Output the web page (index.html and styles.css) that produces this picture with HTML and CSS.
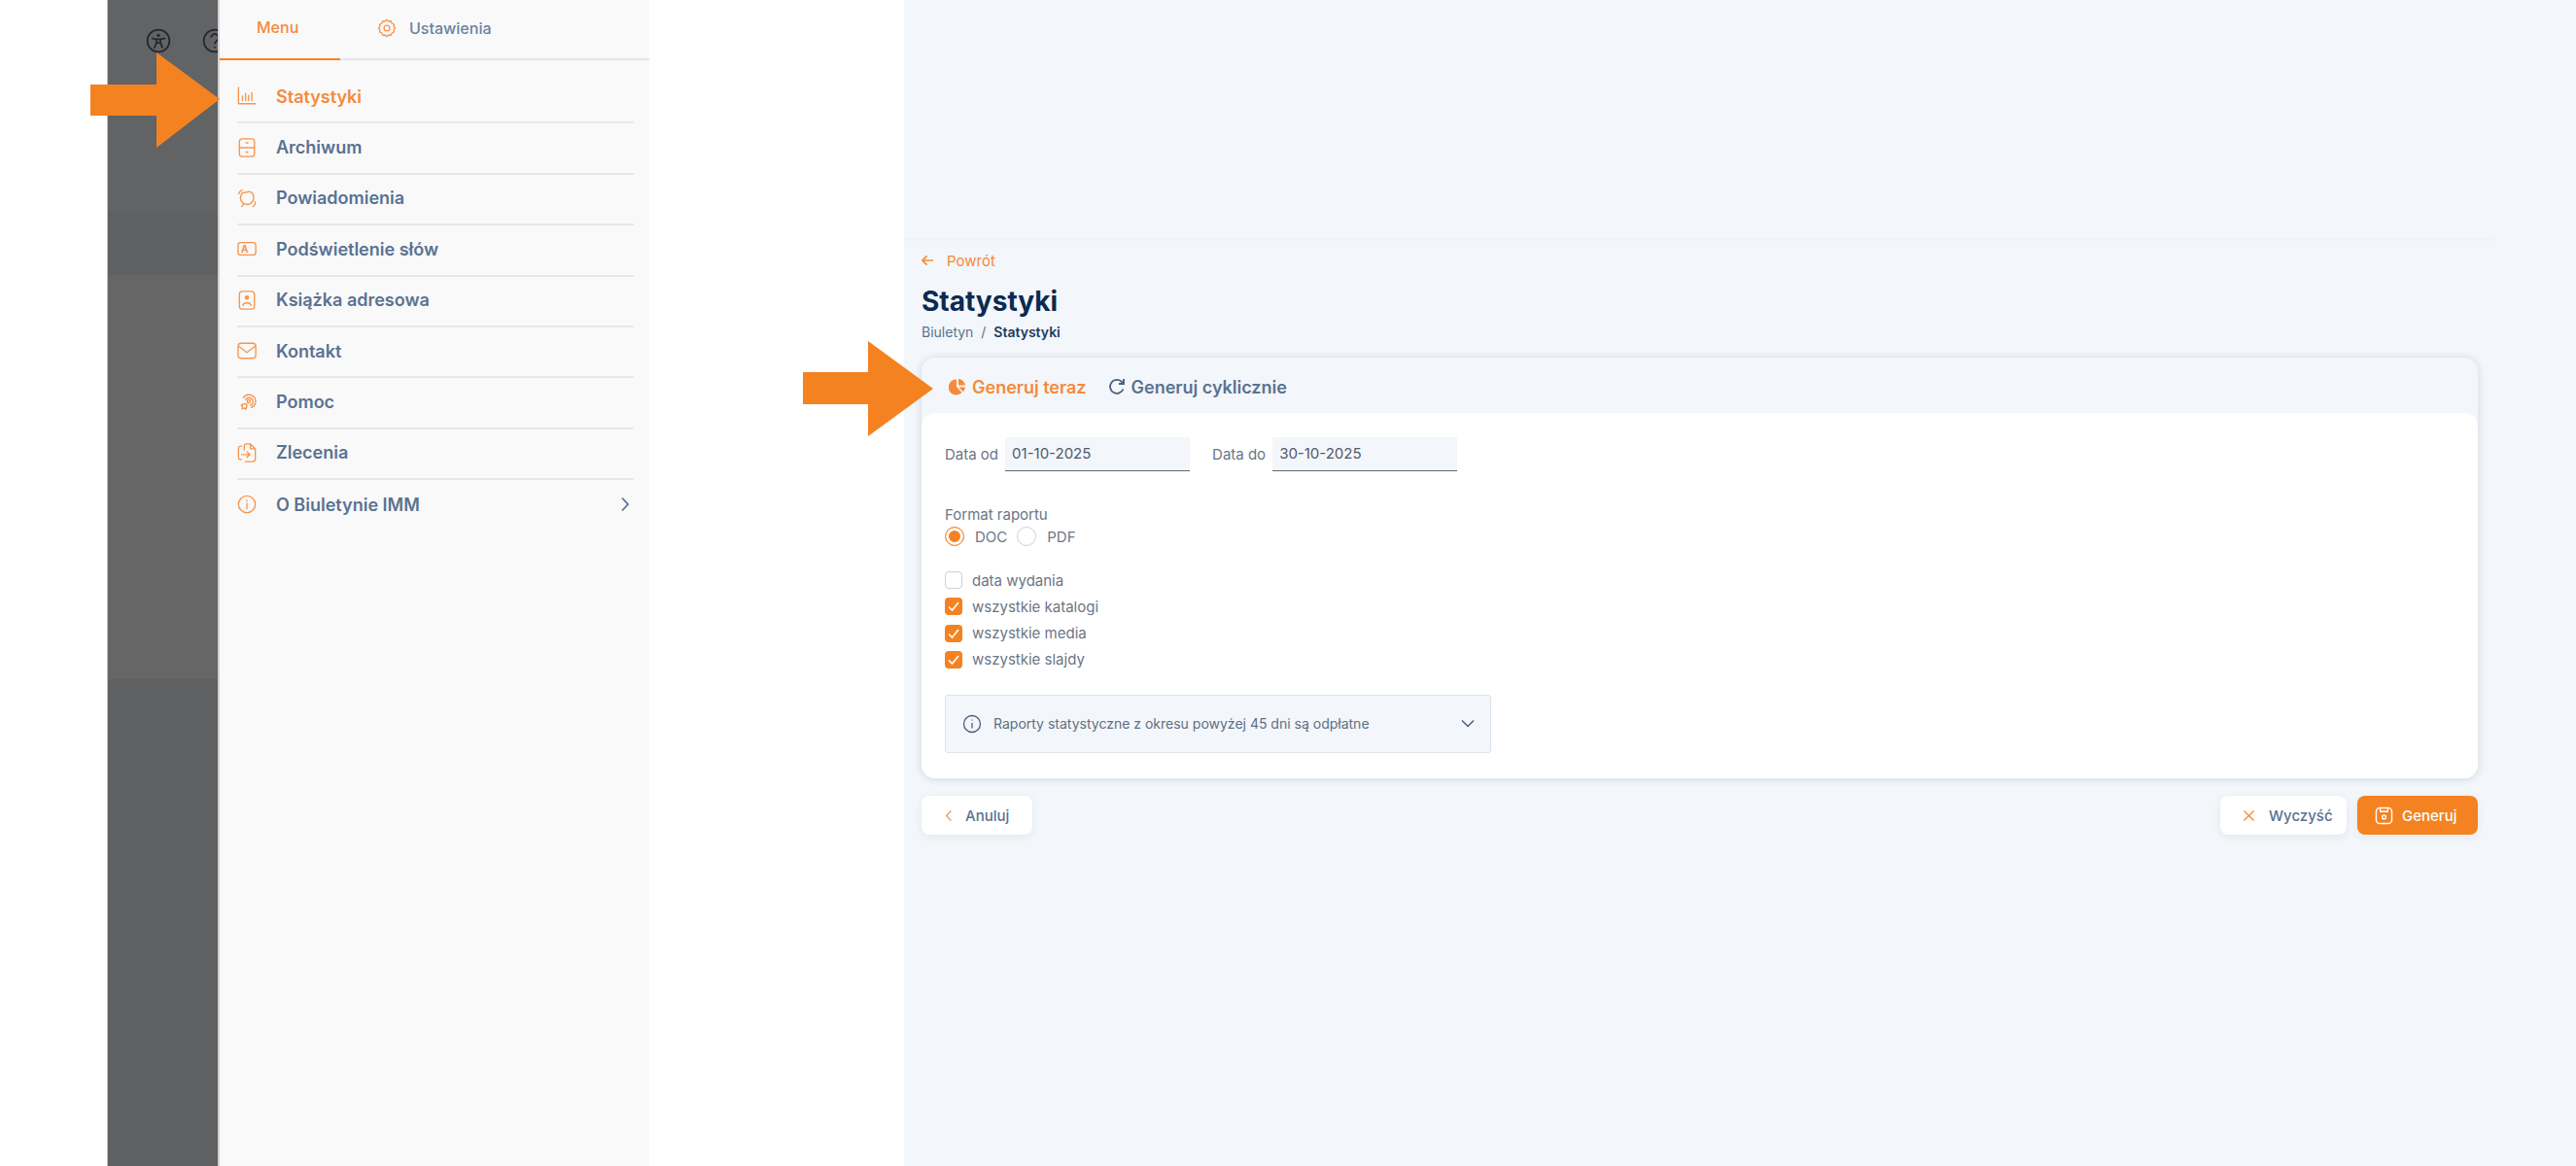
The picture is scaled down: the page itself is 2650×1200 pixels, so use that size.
FILE: index.html
```html
<!doctype html>
<html lang="pl">
<head>
  <meta charset="utf-8">
  <title>Statystyki | Biuletyn IMM</title>
  <link rel="stylesheet" href="styles.css">
</head>
<body>
  <div class="page">
    <div class="margin-left"></div>

    <!-- dimmed app behind the menu -->
    <div class="backdrop">
      <div class="backdrop-top">
        <svg class="backdrop-icon" viewBox="0 0 24 24"><circle cx="12" cy="12" r="10.5"/><circle cx="12" cy="6.8" r="1.6" class="solid"/><path d="M5.5 9.5l4.5 1v3.5l-2 5M18.5 9.5l-4.5 1v3.5l2 5M10 10.5h4M10 14h4"/></svg>
        <svg class="backdrop-icon" viewBox="0 0 24 24"><circle cx="12" cy="12" r="10.5"/><path d="M8.5 9a3.5 3.5 0 1 1 5.4 3c-1.300.8-1.900 1.500-1.900 3M12 17.500v1.500"/></svg>
      </div>
      <div class="backdrop-band"></div>
      <div class="backdrop-mid"></div>
      <div class="backdrop-bottom"></div>
    </div>

    <aside class="sidebar">
      <div class="side-tabs">
        <div class="side-tab active">Menu</div>
        <div class="side-tab">
          <svg class="ico ico-gear" viewBox="0 0 22 22"><path d="M11 1.500l2 1.800 2.700-.3 1 2.500 2.500 1.200-.4 2.700L20.500 11l-1.700 1.600.4 2.700-2.500 1.200-1 2.500-2.700-.3-2 1.800-2-1.800-2.700.3-1-2.500-2.500-1.200.4-2.700L1.500 11l1.700-1.600-.4-2.700 2.500-1.200 1-2.500 2.700.3z"/><circle cx="11" cy="11" r="3.200"/></svg>
          <span>Ustawienia</span>
        </div>
      </div>
      <ul class="side-menu">
        <li class="side-item active">
          <svg class="ico" viewBox="0 0 22 22"><path d="M1.500 1v18.500h19M6 16v-5M9.500 16V8M13 16v-6M16.500 16V7"/></svg>
          <span>Statystyki</span>
        </li>
        <li class="side-item">
          <svg class="ico" viewBox="0 0 22 22"><rect x="2.500" y="1" width="17" height="20" rx="3.500"/><path d="M2.500 11h17M10 5.500h2M10 16h2"/></svg>
          <span>Archiwum</span>
        </li>
        <li class="side-item">
          <svg class="ico" viewBox="0 0 22 22"><path d="M6 5l8-1.500c3 1 5 4 4.500 8-.5 3-2.500 5.500-5.500 6.500-3 .5-7-1-8.500-4C3 11 4 7 6 5zM2 6c0-2 2-4 4-4M20 15c1 2 0 4-2 5.500M7 18l-2 2.500"/></svg>
          <span>Powiadomienia</span>
        </li>
        <li class="side-item">
          <svg class="ico" viewBox="0 0 22 22"><rect x="1" y="4" width="20" height="14" rx="3"/><text x="4.500" y="15" class="ico-letter">A</text></svg>
          <span>Podświetlenie słów</span>
        </li>
        <li class="side-item">
          <svg class="ico" viewBox="0 0 22 22"><rect x="2.500" y="1" width="17" height="20" rx="3.500"/><circle cx="11" cy="8" r="2.500" class="solid"/><path d="M6.500 17c0-4 9-4 9 0"/></svg>
          <span>Książka adresowa</span>
        </li>
        <li class="side-item">
          <svg class="ico" viewBox="0 0 22 22"><rect x="1" y="2.500" width="20" height="17" rx="3.500"/><path d="M2 6l9 7 9-7"/></svg>
          <span>Kontakt</span>
        </li>
        <li class="side-item">
          <svg class="ico" viewBox="0 0 22 22"><path d="M7 6a7.500 7.500 0 1 1 9 11M9.500 8a4.500 4.500 0 1 1 5.500 6.500"/><circle cx="13" cy="10" r="1.800"/><path d="M9.500 12.500l-4 1-1 1 1.500 1-.5 3 3-1 1 1.500 1-1.500.5-4z"/></svg>
          <span>Pomoc</span>
        </li>
        <li class="side-item">
          <svg class="ico" viewBox="0 0 22 22"><path d="M5 3.500H3.500a2 2 0 0 0-2 2v11a2 2 0 0 0 2 2H5M8 8V3a2 2 0 0 1 2-2h5l5.500 5.500V18a3 3 0 0 1-3 3H9M15 1.500V6.500h5M5 13h9M11 10l3.500 3-3.500 3"/></svg>
          <span>Zlecenia</span>
        </li>
        <li class="side-item has-more">
          <svg class="ico" viewBox="0 0 22 22"><circle cx="11" cy="11" r="9.500"/><path d="M11 10v6M11 6.500v1"/></svg>
          <span>O Biuletynie IMM</span>
          <svg class="more" viewBox="0 0 10 16"><path d="M2 1.500l6 6.500-6 6.500"/></svg>
        </li>
      </ul>
    </aside>

    <div class="gap-white"></div>

    <main class="panel">
      <div class="panel-top"></div>
      <div class="panel-body">
        <a class="back-link">
          <svg viewBox="0 0 14 12"><path d="M13 6H1.500M6 1L1 6l5 5"/></svg>
          <span>Powrót</span>
        </a>
        <h1 class="page-title">Statystyki</h1>
        <div class="crumbs">Biuletyn <span class="crumb-sep">/</span> <b>Statystyki</b></div>

        <section class="card">
          <div class="card-tabs">
            <div class="card-tab active">
              <svg viewBox="0 0 18 18"><path class="fill-orange" d="M8 1.500V9l5.500 6A8 8 0 1 1 8 1.500zM10 1a7.500 7.500 0 0 1 7 6.500h-7zM10.500 9.500H17a8 8 0 0 1-2.200 4.700z"/></svg>
              <span>Generuj teraz</span>
            </div>
            <div class="card-tab">
              <svg viewBox="0 0 18 18"><path d="M15.500 11.500A7 7 0 1 1 13.500 3.500L15.500 5.500M16 1v5h-5"/></svg>
              <span>Generuj cyklicznie</span>
            </div>
          </div>
          <div class="card-content">
            <div class="date-row">
              <label class="date-field">Data od <span class="date-input">01-10-2025</span></label>
              <label class="date-field">Data do <span class="date-input">30-10-2025</span></label>
            </div>

            <div class="format">
              <div class="format-label">Format raportu</div>
              <div class="radios">
                <span class="radio checked"></span><span class="radio-label">DOC</span>
                <span class="radio"></span><span class="radio-label">PDF</span>
              </div>
            </div>

            <div class="checks">
              <div class="check"><span class="box"></span>data wydania</div>
              <div class="check"><span class="box on"><svg viewBox="0 0 18 18"><path d="M4 9.500l3.500 3.500L14 5"/></svg></span>wszystkie katalogi</div>
              <div class="check"><span class="box on"><svg viewBox="0 0 18 18"><path d="M4 9.500l3.500 3.500L14 5"/></svg></span>wszystkie media</div>
              <div class="check"><span class="box on"><svg viewBox="0 0 18 18"><path d="M4 9.500l3.500 3.500L14 5"/></svg></span>wszystkie slajdy</div>
            </div>

            <div class="notice">
              <svg class="notice-icon" viewBox="0 0 20 20"><circle cx="10" cy="10" r="8.500"/><path d="M10 9v5.500M10 5.500v1"/></svg>
              <span class="notice-text">Raporty statystyczne z okresu powyżej 45 dni są odpłatne</span>
              <svg class="notice-arrow" viewBox="0 0 14 9"><path d="M1 1.500l6 6 6-6"/></svg>
            </div>
          </div>
        </section>

        <div class="actions">
          <button class="btn btn-cancel">
            <svg viewBox="0 0 10 16"><path d="M8 1.500L2 8l6 6.500"/></svg>
            <span>Anuluj</span>
          </button>
          <div class="actions-right">
            <button class="btn btn-clear">
              <svg viewBox="0 0 14 14"><path d="M1.500 1.500l11 11M12.500 1.500l-11 11"/></svg>
              <span>Wyczyść</span>
            </button>
            <button class="btn btn-primary">
              <svg viewBox="0 0 20 20"><rect x="1.500" y="1.500" width="17" height="17" rx="4"/><path d="M6 1.500v4h8v-4"/><circle cx="10" cy="11.500" r="2"/></svg>
              <span>Generuj</span>
            </button>
          </div>
        </div>
      </div>
    </main>

    <!-- annotation arrows drawn over the screenshot -->
    <svg class="arrow arrow-menu" viewBox="0 0 133 98"><path d="M0 33h68V0l65 48-65 50V65H0z"/></svg>
    <svg class="arrow arrow-tab" viewBox="0 0 134 98"><path d="M0 32h67V0l67 49-67 49V65H0z"/></svg>
  </div>
</body>
</html>
```

FILE: styles.css
```css
* {
  box-sizing: border-box;
}
html, body {
  margin: 0;
  background: #fff;
}
body {
  font-family: 'Inter', 'Liberation Sans', sans-serif;
  color: #5a7291;
}
svg {
  fill: none;
  flex: none;
}
.page {
  display: flex;
  width: 2650px;
  height: 1200px;
  overflow: hidden;
  position: relative;
}
.margin-left {
  width: 110px;
}

/* dimmed background */
.backdrop {
  width: 114px;
  display: flex;
  flex-direction: column;
  overflow: hidden;
  border-left: 1px solid #bbb;
}
.backdrop-top {
  height: 218px;
  background: #626365;
  display: flex;
  gap: 32px;
  padding: 29px 0 0 39px;
  flex-wrap: nowrap;
}
.backdrop-icon {
  width: 26px;
  height: 26px;
  stroke: #23272e;
  stroke-width: 1.6;
}
.backdrop-icon .solid {
  fill: #23272e;
  stroke: none;
}
.backdrop-band {
  height: 65px;
  background: #5f6062;
}
.backdrop-mid {
  height: 416px;
  background: #666;
}
.backdrop-bottom {
  flex: 1;
  background: #5f6062;
}

/* side menu */
.sidebar {
  width: 444px;
  background: #f9f9f9;
  border-left: 2px solid #d4d4d4;
}
.side-tabs {
  display: flex;
  height: 62px;
  border-bottom: 2px solid #e3e6ea;
  font-size: 16px;
  font-weight: 500;
}
.side-tab {
  display: flex;
  align-items: center;
  gap: 13px;
  padding: 0 0 4px 38px;
  color: #6b82a0;
  height: 62px;
}
.side-tab.active {
  width: 124px;
  color: #f58a3a;
  border-bottom: 2px solid #f58220;
}
.side-menu {
  list-style: none;
  margin: 13px 0 0;
  padding: 0 16px 0 18px;
}
.side-item {
  display: flex;
  align-items: center;
  gap: 20px;
  height: 52.4px;
  padding-bottom: 2px;
  border-bottom: 2px solid #e4e8ee;
  font-size: 18px;
  font-weight: 600;
}
.side-item.active {
  color: #f58a3a;
}
.side-item.has-more {
  border-bottom: 0;
}
.ico {
  width: 20px;
  height: 20px;
  stroke: #f7964e;
  stroke-width: 1.500;
  stroke-linecap: round;
  stroke-linejoin: round;
}
.ico .solid {
  fill: #f7964e;
  stroke: none;
}
.ico-letter {
  font-family: 'Inter', sans-serif;
  font-size: 11px;
  font-weight: 700;
  fill: #f7964e;
  stroke: none;
}
.ico-gear {
  margin-left: 0;
}
.more {
  width: 10px;
  height: 16px;
  margin-left: auto;
  margin-right: 4px;
  stroke: #5a7291;
  stroke-width: 1.800;
}
.gap-white {
  width: 262px;
}

/* main panel */
.panel {
  width: 1720px;
  background: #f3f6fa;
}
.panel-top {
  height: 248px;
  margin-right: 83px;
  border-bottom: 3px solid #f0f3f7;
}
.panel-body {
  padding: 11px 101px 0 18px;
}
.back-link {
  display: flex;
  align-items: center;
  gap: 13px;
  color: #f58a3a;
  font-size: 15px;
  height: 18px;
}
.back-link svg {
  width: 13px;
  height: 12px;
  stroke: #f58a3a;
  stroke-width: 1.800;
}
.page-title {
  margin: 15px 0 0;
  font-size: 28px;
  line-height: 36px;
  font-weight: 700;
  color: #0b2a52;
}
.crumbs {
  margin-top: 5px;
  font-size: 14px;
  line-height: 18px;
  color: #5a7291;
}
.crumbs b {
  font-weight: 600;
  color: #1c3a60;
}
.crumb-sep {
  margin: 0 4px;
}

.card {
  margin-top: 17px;
  background: #f3f6fa;
  border-radius: 14px;
  box-shadow: 0 1px 8px rgba(40,60,90,0.16);
}
.card-tabs {
  display: flex;
  gap: 22px;
  height: 57px;
  padding: 3px 0 0 28px;
  align-items: center;
  font-size: 18px;
  font-weight: 600;
}
.card-tab {
  display: flex;
  align-items: center;
  gap: 6px;
}
.card-tab.active {
  color: #f58a3a;
}
.card-tab svg {
  width: 18px;
  height: 18px;
  stroke: #4a6080;
  stroke-width: 1.800;
}
.fill-orange {
  fill: #f58a3a;
  stroke: none;
}
.card-content {
  background: #fff;
  border-radius: 14px;
  padding: 25px 24px 24px;
  height: 376px;
  font-size: 15px;
  color: #6b7686;
}
.date-row {
  display: flex;
  gap: 23px;
}
.date-field {
  display: flex;
  align-items: center;
  gap: 7px;
}
.date-input {
  display: block;
  width: 190px;
  height: 35px;
  line-height: 33px;
  padding-left: 7px;
  background: #f3f6fa;
  border-bottom: 1px solid #5f6670;
  color: #4d5a6c;
}
.format {
  margin-top: 36px;
}
.format-label {
  line-height: 18px;
}
.radios {
  display: flex;
  align-items: center;
  margin-top: 2px;
  height: 22px;
}
.radio {
  width: 20px;
  height: 20px;
  border-radius: 50%;
  border: 1.500px solid #c9d2dd;
  background: #fff;
}
.radio.checked {
  border-color: #f58a3a;
  box-shadow: inset 0 0 0 3px #fff;
  background: #f58220;
}
.radio-label {
  margin: 0 10px 0 11px;
}
.checks {
  margin-top: 25px;
  display: flex;
  flex-direction: column;
  gap: 9.300px;
}
.check {
  display: flex;
  align-items: center;
  gap: 10px;
  height: 18px;
}
.box {
  width: 18px;
  height: 18px;
  border-radius: 4px;
  border: 1.500px solid #c9d2dd;
  background: #fff;
}
.box.on {
  border: 0;
  background: #f58220;
}
.box svg {
  display: block;
  width: 18px;
  height: 18px;
  stroke: #fff;
  stroke-width: 1.600;
}
.notice {
  margin-top: 27px;
  width: 562px;
  height: 60px;
  display: flex;
  align-items: center;
  padding: 0 16px 0 17px;
  background: #f3f6fa;
  border: 1.500px solid #dde3ea;
  border-radius: 3px;
  font-size: 14px;
  color: #5f6f84;
}
.notice-icon {
  width: 20px;
  height: 20px;
  stroke: #4a6080;
  stroke-width: 1.300;
}
.notice-text {
  margin-left: 12px;
}
.notice-arrow {
  width: 14px;
  height: 9px;
  margin-left: auto;
  stroke: #4a6080;
  stroke-width: 1.500;
}
.actions {
  display: flex;
  justify-content: space-between;
  margin-top: 18px;
}
.actions-right {
  display: flex;
  gap: 11px;
}
.btn {
  display: flex;
  align-items: center;
  height: 40px;
  border: 0;
  border-radius: 8px;
  background: #fff;
  font-family: inherit;
  font-size: 15px;
  font-weight: 500;
  color: #5a7291;
  box-shadow: 0 2px 8px rgba(40,60,90,0.08);
}
.btn svg {
  stroke: #f58a3a;
  stroke-width: 1.500;
}
.btn-cancel {
  width: 114px;
  padding-left: 24px;
  gap: 13px;
}
.btn-cancel svg {
  width: 8px;
  height: 15px;
}
.btn-clear {
  width: 130px;
  padding-left: 23px;
  gap: 14px;
}
.btn-clear svg {
  width: 13px;
  height: 13px;
}
.btn-primary {
  width: 124px;
  padding-left: 18px;
  gap: 9px;
  background: #f58220;
  color: #fff;
}
.btn-primary svg {
  width: 19px;
  height: 19px;
  stroke: #fff;
}

/* annotation arrows */
.arrow {
  position: absolute;
}
.arrow path {
  fill: #f58220;
}
.arrow-menu {
  left: 93px;
  top: 54px;
  width: 133px;
  height: 98px;
}
.arrow-tab {
  left: 826px;
  top: 351px;
  width: 134px;
  height: 98px;
}
```
